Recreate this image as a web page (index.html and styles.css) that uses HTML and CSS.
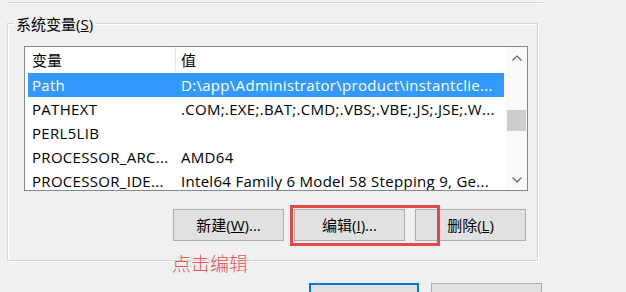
FILE: index.html
```html
<!DOCTYPE html>
<html lang="zh-CN">
<head>
<meta charset="utf-8">
<title>系统变量</title>
<link rel="stylesheet" href="styles.css">
</head>
<body>
<div class="page">
  <div class="prev-group"></div>
  <div class="group">
    <span class="caption">系统变量(<u>S</u>)</span>
    <div class="listview">
      <div class="lv-main">
        <div class="lv-header">
          <div class="h-name">变量</div>
          <div class="h-value">值</div>
        </div>
        <div class="lv-rows">
          <div class="row selected"><span class="c-name">Path</span><span class="c-value">D:\app\Administrator\product\instantclie...</span></div>
          <div class="row"><span class="c-name">PATHEXT</span><span class="c-value">.COM;.EXE;.BAT;.CMD;.VBS;.VBE;.JS;.JSE;.W...</span></div>
          <div class="row"><span class="c-name">PERL5LIB</span><span class="c-value"></span></div>
          <div class="row"><span class="c-name">PROCESSOR_ARC...</span><span class="c-value">AMD64</span></div>
          <div class="row"><span class="c-name">PROCESSOR_IDE...</span><span class="c-value">Intel64 Family 6 Model 58 Stepping 9, Ge...</span></div>
        </div>
      </div>
      <div class="vscroll">
        <div class="sb-btn"><svg width="10" height="6" viewBox="0 0 10 6"><path d="M0.5 5.5 L5 1 L9.5 5.5" fill="none" stroke="#606060" stroke-width="1.2"/></svg></div>
        <div class="sb-track"><div class="sb-thumb"></div></div>
        <div class="sb-btn"><svg width="10" height="6" viewBox="0 0 10 6"><path d="M0.5 0.5 L5 5 L9.5 0.5" fill="none" stroke="#606060" stroke-width="1.2"/></svg></div>
      </div>
    </div>
    <div class="btn-row">
      <button class="btn">新建(<u>W</u>)...</button>
      <button class="btn">编辑(<u>I</u>)...</button>
      <button class="btn">删除(<u>L</u>)</button>
    </div>
  </div>
  <div class="footer">
    <button class="btn default" aria-label="确定"></button>
    <button class="btn wide" aria-label="取消"></button>
  </div>
  <div class="annot-box"></div>
  <div class="annot-text">点击编辑</div>
</div>
</body>
</html>
```
FILE: styles.css
```css
html, body {
  margin: 0;
  background: #f0f0f0;
}
body {
  font-family: "Open Sans", "Noto Sans CJK SC", sans-serif;
  font-size: 15px;
  color: #000;
}
.page {
  position: relative;
  width: 626px;
  height: 292px;
  overflow: hidden;
}
.prev-group {
  margin-left: 7px;
  width: 536px;
  height: 2px;
  border-bottom: 1px solid #dadada;
  box-shadow: 0 1px 0 #fff;
}
.group {
  position: relative;
  box-sizing: border-box;
  margin: 20px 0 0 7px;
  width: 531px;
  height: 238px;
  border: 1px solid #d5d5d5;
  box-shadow: inset 1px 1px 0 #fff, 1px 1px 0 #fff;
  padding: 22px 0 0 16px;
}
.caption {
  position: absolute;
  left: 6px;
  top: -10px;
  padding: 0 2px;
  background: #f0f0f0;
  line-height: 20px;
}
.listview {
  display: flex;
  box-sizing: border-box;
  width: 504px;
  height: 145px;
  border: 1px solid #828790;
  background: #fff;
}
.lv-main {
  flex: 1;
  min-width: 0;
  overflow: hidden;
}
.lv-header {
  display: flex;
  height: 26px;
}
.h-name {
  box-sizing: border-box;
  width: 151px;
  height: 24px;
  padding-left: 7px;
  line-height: 26px;
  border-right: 1px solid #e5e5e5;
}
.h-value {
  padding-left: 5px;
  line-height: 26px;
}
.lv-rows {
  padding: 0 2px 0 3px;
}
.row {
  display: flex;
  height: 24px;
  line-height: 24px;
  white-space: nowrap;
  letter-spacing: 0.3px;
}
.c-name {
  box-sizing: border-box;
  width: 149px;
  flex: none;
  padding-left: 4px;
  overflow: hidden;
}
.c-value {
  flex: 1;
  min-width: 0;
  padding-left: 4px;
  overflow: hidden;
}
.selected {
  background: #3399ff;
  color: #fff;
}
.vscroll {
  width: 21px;
  display: flex;
  flex-direction: column;
  background: #f9f9f9;
}
.sb-btn {
  height: 21px;
  display: flex;
  align-items: center;
  justify-content: center;
}
.sb-track {
  flex: 1;
  padding-top: 42px;
}
.sb-thumb {
  height: 21px;
  margin: 0 1px;
  background: #cdcdcd;
}
.btn-row {
  box-sizing: border-box;
  display: flex;
  justify-content: flex-end;
  gap: 10px;
  width: 504px;
  padding-right: 2px;
  margin-top: 18px;
}
.btn {
  box-sizing: border-box;
  width: 111px;
  height: 32px;
  padding: 0;
  border: 1px solid #adadad;
  background: #e1e1e1;
  font: inherit;
  color: #000;
  line-height: 20px;
}
.footer {
  display: flex;
  gap: 12px;
  padding-left: 309px;
  margin-top: 22px;
}
.btn.default {
  width: 110px;
  border: 2px solid #0078d7;
}
.annot-box {
  position: absolute;
  left: 290px;
  top: 205px;
  box-sizing: border-box;
  width: 150px;
  height: 41px;
  border: 3px solid #df4a4c;
}
.annot-text {
  position: absolute;
  left: 172px;
  top: 252px;
  font-family: "Noto Sans CJK SC", sans-serif;
  font-size: 19px;
  font-weight: 300;
  line-height: 22px;
  color: #e25656;
}
```
